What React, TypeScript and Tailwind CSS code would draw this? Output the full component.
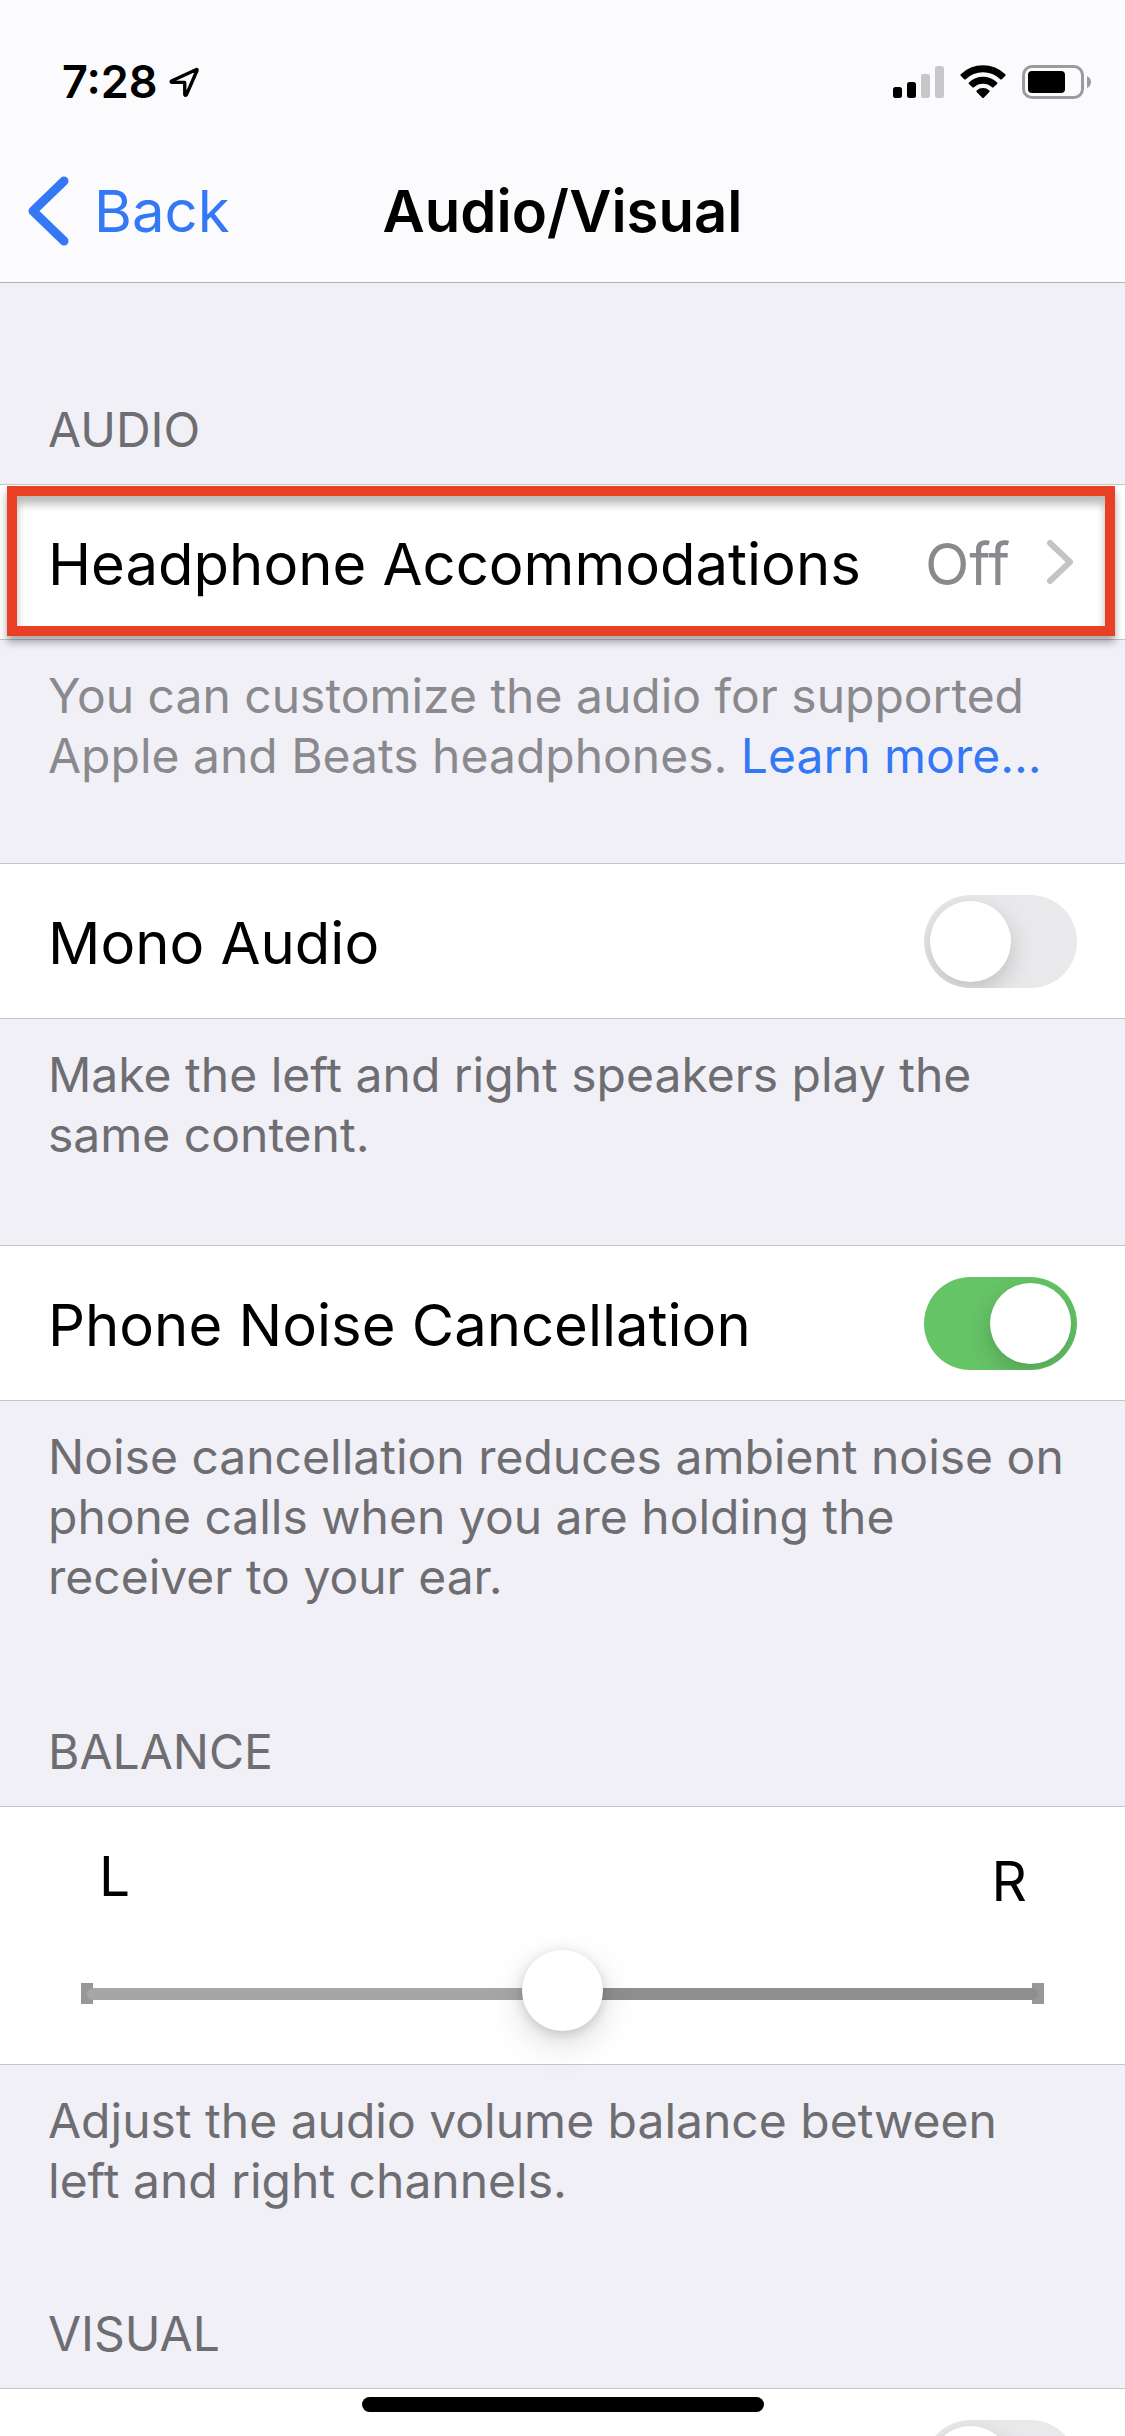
import { useState, type ReactNode } from "react";

function StatusBar() {
  return (
    <div className="flex h-[132px] items-center justify-between pt-8 pr-[33px] pl-[62px]">
      <div className="flex items-center gap-2.5">
        <span className="text-[45px] leading-[50px] font-semibold">7:28</span>
        <svg width="32" height="32" viewBox="0 0 32 32" fill="none" aria-hidden="true">
          <path
            d="M28.5 3.5 L3.5 15 Q2.5 16 4 16.2 L16.7 16.4 L16.8 28.5 Q17.5 30.2 18.6 28.4 L29 4.5 Q29.2 3.2 28.5 3.5 Z"
            stroke="#000"
            strokeWidth="3.4"
            strokeLinejoin="round"
          />
        </svg>
      </div>
      <div className="flex items-center gap-4">
        <svg width="51" height="34" viewBox="0 0 51 34" aria-hidden="true">
          <rect x="0" y="22" width="9" height="11" rx="2.5" />
          <rect x="14" y="17" width="9" height="16" rx="2.5" />
          <rect x="28" y="9" width="9" height="24" rx="2.5" fill="#c7c7c9" />
          <rect x="42" y="1" width="9" height="32" rx="2.5" fill="#c7c7c9" />
        </svg>
        <svg width="46" height="34" viewBox="0 0 46 34" aria-hidden="true">
          <path d="M.7 9.2 Q0 10 .7 10.7 L4.2 14.2 Q5 14.9 5.8 14.2 A25 25 0 0 1 40.2 14.2 Q41 14.9 41.8 14.2 L45.3 10.7 Q46 10 45.3 9.2 A32 32 0 0 0 .7 9.2 Z" />
          <path d="M8.9 17.4 Q8.2 18.2 8.9 18.9 L12.5 22.3 Q13.2 22.9 14 22.3 A13.5 13.5 0 0 1 32 22.3 Q32.8 22.9 33.5 22.3 L37.1 18.9 Q37.8 18.2 37.1 17.4 A20.5 20.5 0 0 0 8.9 17.4 Z" />
          <path d="M16.7 25.4 Q16 26.2 16.7 26.9 L22.2 32.7 Q23 33.6 23.8 32.7 L29.3 26.9 Q30 26.2 29.3 25.4 A9.5 9.5 0 0 0 16.7 25.4 Z" />
        </svg>
        <svg width="70" height="34" viewBox="0 0 70 34" aria-hidden="true">
          <rect x="1.5" y="1.5" width="59" height="31" rx="8.5" fill="none" stroke="#9b9b9d" strokeWidth="3" />
          <rect x="6" y="6" width="37" height="22" rx="4" />
          <path d="M65 11 V23 Q69 21 69 17 Q69 13 65 11 Z" fill="#9b9b9d" />
        </svg>
      </div>
    </div>
  );
}

function NavBar() {
  return (
    <div className="grid h-[150px] grid-cols-[1fr_auto_1fr] items-center pt-2">
      <button type="button" className="flex items-center gap-6 pl-7 text-[58px] leading-[74px] text-[#3478f6]">
        <svg width="42" height="70" viewBox="0 0 42 70" fill="none" aria-hidden="true">
          <path d="M36 5 L5 35 L36 65" stroke="currentColor" strokeWidth="9" strokeLinecap="round" strokeLinejoin="round" />
        </svg>
        Back
      </button>
      <h1 className="text-[58px] leading-[74px] font-semibold">Audio/Visual</h1>
    </div>
  );
}

function SectionHeader({ children }: { children: ReactNode }) {
  return <h2 className="px-12 pb-6 text-[48px] leading-[60px] text-[#6d6d72]">{children}</h2>;
}

function Footer({ children, light = false }: { children: ReactNode; light?: boolean }) {
  return (
    <p className={light ? "px-12 pt-[26px] text-[48px] leading-[60px] text-[#8a8a8e]" : "px-12 pt-[26px] text-[48px] leading-[60px] text-[#6d6d72]"}>
      {children}
    </p>
  );
}

const ROW = "flex h-[156px] items-center justify-between border-y border-[#c6c6c8] bg-white px-12 text-[58px] leading-[74px]";

function Switch({ id, label, initial = false }: { id: string; label?: string; initial?: boolean }) {
  const [on, setOn] = useState(initial);
  return (
    <input
      id={id}
      type="checkbox"
      role="switch"
      aria-label={label}
      checked={on}
      onChange={() => setOn(!on)}
      className="h-[93px] w-[153px] shrink-0 appearance-none overflow-hidden rounded-full bg-[#e9e9eb] p-1.5 before:block before:size-[81px] before:rounded-full before:bg-white before:shadow-[0_9px_24px_rgba(0,0,0,0.18)] before:content-[''] checked:bg-[#65c466] checked:before:ml-[60px]"
    />
  );
}

function SwitchRow({ id, label, initial }: { id: string; label: string; initial?: boolean }) {
  return (
    <div className={ROW}>
      <label htmlFor={id} className="pt-1">{label}</label>
      <Switch id={id} initial={initial} />
    </div>
  );
}

function BalanceSlider() {
  const [value, setValue] = useState(50);
  return (
    <div className="h-[259px] border-y border-[#c6c6c8] bg-white px-[81px] pt-9">
      <div className="flex justify-between pr-[17px] pl-[18px] text-[55px] leading-[66px]">
        <span>L</span>
        <span className="pt-[5px]">R</span>
      </div>
      <div className="mt-[69px] flex items-center">
        <span className="h-[21px] w-3 bg-[#989898]" />
        <input
          type="range"
          aria-label="Balance"
          min={0}
          max={100}
          value={value}
          onChange={(e) => setValue(Number(e.target.value))}
          style={{ backgroundImage: `linear-gradient(to right, #a6a6a6 ${value}%, #8f8f91 ${value}%)` }}
          className="relative z-10 -mx-1.5 h-3 min-w-0 flex-1 appearance-none rounded-full [&::-webkit-slider-runnable-track]:h-3 [&::-webkit-slider-thumb]:-mt-[38px] [&::-webkit-slider-thumb]:size-[81px] [&::-webkit-slider-thumb]:appearance-none [&::-webkit-slider-thumb]:rounded-full [&::-webkit-slider-thumb]:bg-white [&::-webkit-slider-thumb]:shadow-[0_12px_36px_rgba(0,0,0,0.15),0_3px_12px_rgba(0,0,0,0.15)]"
        />
        <span className="h-[21px] w-3 bg-[#989898]" />
      </div>
    </div>
  );
}

export default function App() {
  return (
    <div className="h-screen overflow-hidden bg-[#f1f0f6] font-['Inter',sans-serif] text-black">
      <header className="border-b border-[#b2b1b8] bg-[#fbfbfd]">
        <StatusBar />
        <NavBar />
      </header>
      <main>
        <section className="pt-[117px]">
          <SectionHeader>AUDIO</SectionHeader>
          <div className="relative">
            <button type="button" className={ROW + " w-full"}>
              <span className="pt-1">Headphone Accommodations</span>
              <span className="flex items-center gap-9 text-[#8a8a8e]">
                <span className="pt-1">Off</span>
                <svg width="31" height="48" viewBox="0 0 31 48" fill="none" aria-hidden="true">
                  <path d="M4 5 L24 24 L4 43" stroke="#c4c4c6" strokeWidth="6" strokeLinecap="round" strokeLinejoin="round" />
                </svg>
              </span>
            </button>
            <div className="pointer-events-none absolute top-0.5 right-2.5 bottom-1 left-[7px] border-10 border-[#e94025] shadow-[0_6px_8px_rgba(0,0,0,0.35),inset_0_8px_8px_rgba(0,0,0,0.28)]" />
          </div>
          <Footer light>
            You can customize the audio for supported Apple and Beats headphones.{" "}
            <a href="#learn-more" className="text-[#3478f6]">Learn more...</a>
          </Footer>
        </section>
        <section className="pt-[77px]">
          <SwitchRow id="mono-audio" label="Mono Audio" />
          <Footer>Make the left and right speakers play the same content.</Footer>
        </section>
        <section className="pt-20">
          <SwitchRow id="noise-cancellation" label="Phone Noise Cancellation" initial />
          <Footer>Noise cancellation reduces ambient noise on phone calls when you are holding the receiver to your ear.</Footer>
        </section>
        <section className="pt-[115px]">
          <SectionHeader>BALANCE</SectionHeader>
          <BalanceSlider />
          <Footer>Adjust the audio volume balance between left and right channels.</Footer>
        </section>
        <section className="pt-[93px]">
          <SectionHeader>VISUAL</SectionHeader>
          <div className={ROW + " justify-end"}>
            <Switch id="visual-option" label="Visual option" />
          </div>
        </section>
      </main>
      <div className="fixed inset-x-0 bottom-6 flex justify-center">
        <div className="h-[15px] w-[402px] rounded-full bg-black" />
      </div>
    </div>
  );
}
